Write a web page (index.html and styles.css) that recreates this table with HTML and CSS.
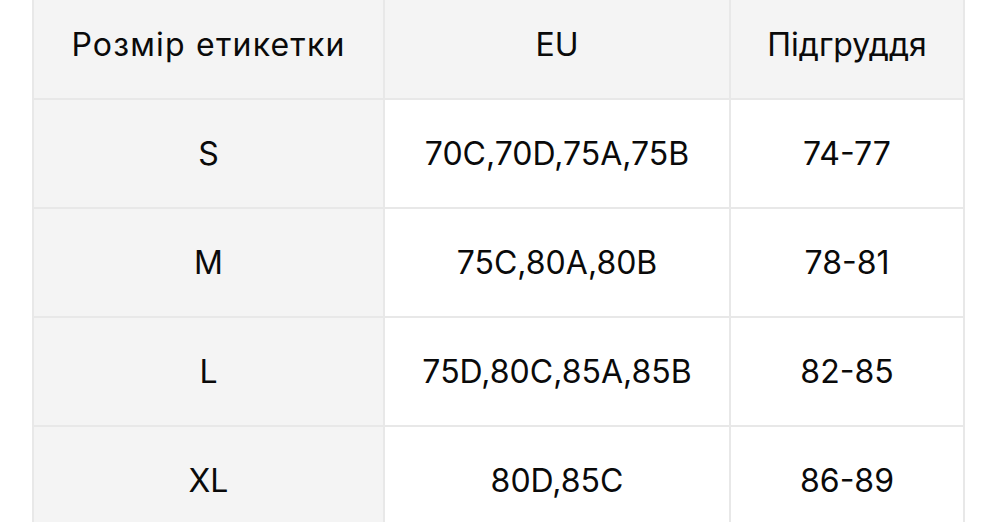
FILE: index.html
```html
<!DOCTYPE html>
<html lang="uk">
<head>
<meta charset="utf-8">
<title>Таблиця розмірів</title>
<link rel="stylesheet" href="styles.css">
</head>
<body>
<table class="size-table">
  <colgroup>
    <col class="col-label">
    <col class="col-eu">
    <col class="col-bust">
  </colgroup>
  <thead>
    <tr>
      <th class="wide">Розмір етикетки</th>
      <th>EU</th>
      <th>Підгруддя</th>
    </tr>
  </thead>
  <tbody>
    <tr><td class="label">S</td><td>70C,70D,75A,75B</td><td>74-77</td></tr>
    <tr><td class="label">M</td><td>75C,80A,80B</td><td>78-81</td></tr>
    <tr><td class="label">L</td><td>75D,80C,85A,85B</td><td>82-85</td></tr>
    <tr><td class="label">XL</td><td>80D,85C</td><td>86-89</td></tr>
  </tbody>
</table>
</body>
</html>
```

FILE: styles.css
```css
html, body {
  margin: 0;
  padding: 0;
  background: #ffffff;
  overflow: hidden;
}

body {
  font-family: Inter, "Liberation Sans", Arial, sans-serif;
  color: #0a0a0a;
}

.size-table {
  margin: -11px 0 0 32px;
  border-collapse: collapse;
  table-layout: fixed;
  width: 931px;
  font-size: 32px;
}

.col-label { width: 351px; }
.col-eu { width: 346px; }
.col-bust { width: 234px; }

.size-table th,
.size-table td {
  border: 2px solid #e8e8e8;
  height: 107px;
  padding: 0;
  text-align: center;
  vertical-align: middle;
  font-weight: normal;
  white-space: nowrap;
}

.size-table thead th {
  background: #f4f4f4;
}

.size-table th.wide {
  letter-spacing: 1.2px;
}

.size-table td.label {
  background: #f4f4f4;
}
```
